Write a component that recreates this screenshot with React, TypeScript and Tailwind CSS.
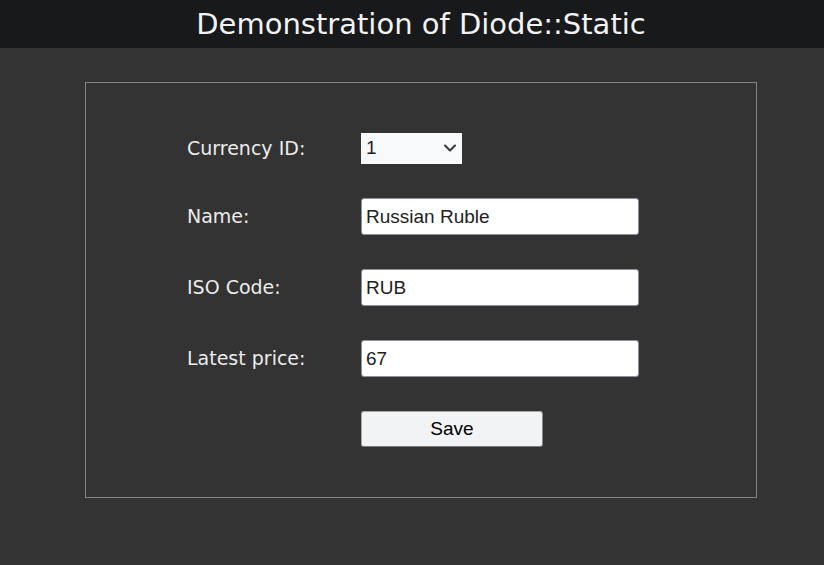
import { ChevronDown } from "lucide-react";

const Row = ({ label, children }: { label: string; children: React.ReactNode }) => (
    <div className="flex items-center">
        <label className="w-[174px] shrink-0 text-[19px] text-[#ececec]">{label}</label>
        {children}
    </div>
);

const TextField = ({ value }: { value: string }) => (
    <input
        type="text"
        defaultValue={value}
        className="h-[37px] w-[278px] rounded-[3px] border border-[#8f8f9d] bg-white px-[4px] text-[19px] text-[#222] outline-none"
        style={{ fontFamily: '"Liberation Sans", Arial, sans-serif' }}
    />
);

const App = () => {
    return (
        <div className="min-h-[565px] bg-[#333333]" style={{ fontFamily: '"DejaVu Sans", sans-serif' }}>
            <header className="flex h-[48px] items-center justify-center bg-[#18191b] pl-[18px]">
                <h1 className="text-[29px] leading-none text-[#f2f2f2] mt-[1px]">Demonstration of Diode::Static</h1>
            </header>

            <div className="ml-[85px] mt-[34px] w-[672px] border border-[#858585] pl-[101px] pt-[50px] pb-[50px]">
                <div className="flex flex-col gap-[34px]">
                    <Row label="Currency ID:">
                        <div className="relative h-[31px] w-[101px] bg-[#f8f9fb]">
                            <select
                                defaultValue="1"
                                className="h-full w-full appearance-none bg-transparent pl-[5px] text-[19px] text-[#222] outline-none"
                                style={{ fontFamily: '"Liberation Sans", Arial, sans-serif' }}
                            >
                                <option value="1">1</option>
                                <option value="2">2</option>
                            </select>
                            <ChevronDown className="pointer-events-none absolute right-[2px] top-[5px] h-[20px] w-[20px] text-[#3a3a3a]" strokeWidth={2.5} />
                        </div>
                    </Row>
                    <Row label="Name:">
                        <TextField value="Russian Ruble" />
                    </Row>
                    <Row label="ISO Code:">
                        <TextField value="RUB" />
                    </Row>
                    <Row label="Latest price:">
                        <TextField value="67" />
                    </Row>
                    <div className="flex">
                        <div className="w-[174px] shrink-0" />
                        <button
                            className="h-[36px] w-[182px] rounded-[3px] border border-[#a8a8a8] border-b-[#7a7a7a] border-r-[#8a8a8a] bg-[#f2f3f5] text-[19px] text-black"
                            style={{ fontFamily: '"Liberation Sans", Arial, sans-serif' }}
                        >
                            Save
                        </button>
                    </div>
                </div>
            </div>
        </div>
    );
};

export default App;
